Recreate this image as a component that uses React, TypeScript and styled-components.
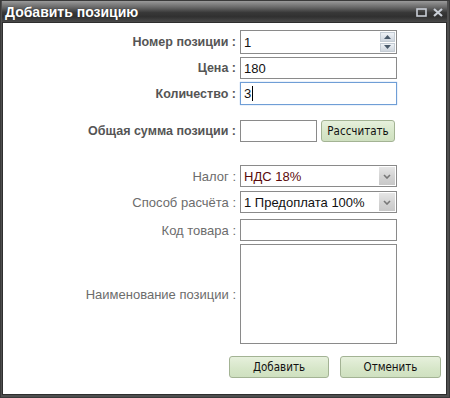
import React from "react";
import styled, { createGlobalStyle } from "styled-components";

const GlobalStyle = createGlobalStyle`
  html, body {
    margin: 0;
    padding: 0;
    background: #ffffff;
  }
  * {
    box-sizing: border-box;
  }
`;

const Window = styled.div`
  width: 450px;
  height: 398px;
  background: #4f4f4f;
  border: 1px solid #3a3a3a;
  display: flex;
  flex-direction: column;
  padding: 0 2px 2px 1px;
  font-family: "Liberation Sans", Arial, sans-serif;
`;

const TitleBar = styled.div`
  height: 21px;
  flex: none;
  display: flex;
  align-items: center;
  justify-content: space-between;
  padding: 0 4px 0 3px;
  background: linear-gradient(
    to bottom,
    #9a9a9a 0%,
    #686868 30%,
    #383838 55%,
    #303030 75%,
    #4a4a4a 100%
  );
`;

const Title = styled.span`
  color: #ffffff;
  font-weight: bold;
  font-size: 14px;
  text-shadow: 0 0 1px #222;
`;

const TitleTools = styled.div`
  display: flex;
  align-items: center;
  gap: 6px;
  padding-top: 1px;
`;

const Body = styled.div`
  flex: 1;
  background: #ffffff;
  border: 1px solid #2e2e2e;
  display: flex;
  flex-direction: column;
  padding: 5px 0 0 0;
`;

const Row = styled.div<{ $top: number }>`
  display: grid;
  grid-template-columns: 233px 157px;
  column-gap: 4px;
  align-items: center;
  margin-top: ${(p) => p.$top}px;
`;

const Label = styled.label<{ $bold?: boolean }>`
  text-align: right;
  font-size: ${(p) => (p.$bold ? "12.5px" : "13px")};
  white-space: nowrap;
  font-weight: ${(p) => (p.$bold ? "bold" : "normal")};
  color: ${(p) => (p.$bold ? "#555555" : "#6c6c6c")};
`;

const Field = styled.div<{ $focused?: boolean; $h?: number; $w?: number }>`
  height: ${(p) => p.$h ?? 22}px;
  width: ${(p) => (p.$w ? `${p.$w}px` : "100%")};
  border: 1px solid ${(p) => (p.$focused ? "#6f9ed6" : "#8a8a8a")};
  box-shadow: ${(p) => (p.$focused ? "0 0 1px #8ab4e8" : "none")};
  background: #ffffff;
  display: flex;
  align-items: center;
  padding-left: 3px;
  font-size: 13px;
  color: #111111;
  position: relative;
`;

const Caret = styled.span`
  display: inline-block;
  width: 1px;
  height: 15px;
  background: #000;
  margin-left: 1px;
`;

const Spinner = styled.div`
  position: absolute;
  right: 1px;
  top: 1px;
  bottom: 1px;
  width: 15px;
  display: flex;
  flex-direction: column;
  gap: 1px;
`;

const SpinHalf = styled.div`
  flex: 1;
  background: linear-gradient(to bottom, #eef2f6, #cfd6de);
  border: 1px solid #c4ccd4;
  display: flex;
  align-items: center;
  justify-content: center;
`;

const SelectValue = styled.span<{ $color?: string }>`
  color: ${(p) => p.$color ?? "#111111"};
  flex: 1;
`;

const SelectArrow = styled.div`
  width: 16px;
  align-self: stretch;
  margin: 1px;
  background: linear-gradient(to bottom, #e6e6e6 0%, #d4d4d4 50%, #c8c8c8 100%);
  display: flex;
  align-items: center;
  justify-content: center;
`;

const Inline = styled.div`
  display: flex;
  align-items: center;
  gap: 4px;
`;

const GreenButton = styled.button<{ $w: number }>`
  width: ${(p) => p.$w}px;
  height: 22px;
  border: 1px solid #a3b394;
  border-radius: 3px;
  background: linear-gradient(to bottom, #e6f0dc 0%, #d6e6c8 60%, #cfe0c0 100%);
  font-family: "DejaVu Sans Condensed", "Liberation Sans", sans-serif;
  font-size: 11.5px;
  color: #111111;
  padding: 0;
  display: flex;
  align-items: center;
  justify-content: center;
`;

const Footer = styled.div`
  display: flex;
  justify-content: flex-end;
  gap: 11px;
  padding-right: 5px;
  margin-top: 12px;
`;

const ChevronDown: React.FC = () => (
  <svg width="8" height="5" viewBox="0 0 8 5">
    <path d="M1 1 L4 4 L7 1" fill="none" stroke="#777" strokeWidth="1.6" />
  </svg>
);

const App: React.FC = () => {
  return (
    <>
      <GlobalStyle />
      <Window>
        <TitleBar>
          <Title>Добавить позицию</Title>
          <TitleTools>
            <svg width="11" height="9" viewBox="0 0 11 9">
              <rect x="1" y="1" width="9" height="7" fill="none" stroke="#c9ced6" strokeWidth="1.6" />
            </svg>
            <svg width="10" height="9" viewBox="0 0 10 9">
              <path d="M1 1 L9 8 M9 1 L1 8" stroke="#c9ced6" strokeWidth="2.2" />
            </svg>
          </TitleTools>
        </TitleBar>
        <Body>
          <Row $top={2}>
            <Label $bold>Номер позиции :</Label>
            <Field $h={24}>
              1
              <Spinner>
                <SpinHalf>
                  <svg width="7" height="4" viewBox="0 0 7 4">
                    <path d="M0 4 L3.5 0 L7 4 Z" fill="#4a5a6a" />
                  </svg>
                </SpinHalf>
                <SpinHalf>
                  <svg width="7" height="4" viewBox="0 0 7 4">
                    <path d="M0 0 L3.5 4 L7 0 Z" fill="#4a5a6a" />
                  </svg>
                </SpinHalf>
              </Spinner>
            </Field>
          </Row>
          <Row $top={3}>
            <Label $bold>Цена :</Label>
            <Field>180</Field>
          </Row>
          <Row $top={3}>
            <Label $bold>Количество :</Label>
            <Field $focused $h={23}>
              3<Caret />
            </Field>
          </Row>
          <Row $top={15}>
            <Label $bold>Общая сумма позиции :</Label>
            <Inline>
              <Field $w={77} />
              <GreenButton $w={74}>Рассчитать</GreenButton>
            </Inline>
          </Row>
          <Row $top={23}>
            <Label>Налог :</Label>
            <Field>
              <SelectValue $color="#5a0a0a">НДС 18%</SelectValue>
              <SelectArrow>
                <ChevronDown />
              </SelectArrow>
            </Field>
          </Row>
          <Row $top={4}>
            <Label>Способ расчёта :</Label>
            <Field>
              <SelectValue>1 Предоплата 100%</SelectValue>
              <SelectArrow>
                <ChevronDown />
              </SelectArrow>
            </Field>
          </Row>
          <Row $top={6}>
            <Label>Код товара :</Label>
            <Field />
          </Row>
          <Row $top={3}>
            <Label>Наименование позиции :</Label>
            <Field $h={100} />
          </Row>
          <Footer>
            <GreenButton $w={100}>Добавить</GreenButton>
            <GreenButton $w={101}>Отменить</GreenButton>
          </Footer>
        </Body>
      </Window>
    </>
  );
};

export default App;
